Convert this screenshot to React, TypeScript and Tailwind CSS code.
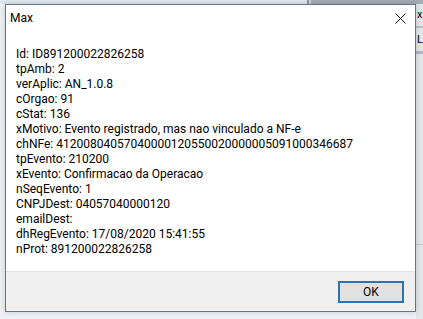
const FIELDS: [string, string][] = [
  ['Id', 'ID891200022826258'],
  ['tpAmb', '2'],
  ['verAplic', 'AN_1.0.8'],
  ['cOrgao', '91'],
  ['cStat', '136'],
  ['xMotivo', 'Evento registrado, mas nao vinculado a NF-e'],
  ['chNFe', '41200804057040000120550020000005091000346687'],
  ['tpEvento', '210200'],
  ['xEvento', 'Confirmacao da Operacao'],
  ['nSeqEvento', '1'],
  ['CNPJDest', '04057040000120'],
  ['emailDest', ''],
  ['dhRegEvento', '17/08/2020 15:41:55'],
  ['nProt', '891200022826258'],
]

export default function App() {
  return (
    <div
      className="relative w-[423px] h-[319px] overflow-hidden bg-[#eef2f6] text-black"
      style={{ fontFamily: 'Roboto, "Noto Sans", Arial, sans-serif' }}
    >
      {/* desktop bits behind the dialog */}
      <div className="absolute left-0 top-0 w-full h-[4px] flex">
        <div className="w-[307px] h-full bg-[#dfe7ef]" />
        <div className="w-[2px] h-full bg-[#8d969f]" />
        <div className="w-[2px] h-full bg-[#d0d6dc]" />
        <div className="flex-1 h-full bg-[#a3abb4]" />
      </div>
      <div className="absolute right-0 top-[4px] w-[7px] h-full bg-[#e4e6e9] flex flex-col text-[11px] leading-none">
        <span className="mt-[5px] pl-[1px]">x</span>
        <div className="mt-[6px] h-[2px] bg-[#b9bec4]" />
        <span className="mt-[6px] pl-[1px]">L</span>
        <div className="mt-[6px] h-[3px] bg-[#b3b8be]" />
        <div className="mt-[190px] h-[1px] bg-[#c2c6cb]" />
      </div>

      {/* dialog */}
      <div className="absolute left-[5px] top-[4px] w-[411px] h-[308px] border border-[#5d7893] bg-white flex flex-col shadow-[0_0_6px_rgba(0,0,0,0.18)]">
        <div className="h-[30px] flex items-center justify-between pl-[4px] pr-[9px] pb-[5px] shrink-0">
          <span className="text-[12px] leading-none">Max</span>
          <svg width="11" height="11" viewBox="0 0 11 11" className="mt-[2px]">
            <path d="M0.5 0.5 L10.5 10.5 M10.5 0.5 L0.5 10.5" stroke="#111" strokeWidth="1" />
          </svg>
        </div>
        <div className="h-[236px] shrink-0 pl-[10px] pt-[12px] text-[12px] leading-[15px] whitespace-nowrap">
          {FIELDS.map(([k, v]) => (
            <div key={k}>
              {k}: {v}
            </div>
          ))}
        </div>
        <div className="flex-1 border-t border-[#dfdfdf] bg-[#f0f0f0] flex justify-end items-start pt-[9px] pr-[11px]">
          <button className="w-[66px] h-[22px] border-2 border-[#2a73b9] bg-[#e1e1e1] text-[12px] leading-none flex items-center justify-center">
            OK
          </button>
        </div>
      </div>
    </div>
  )
}
